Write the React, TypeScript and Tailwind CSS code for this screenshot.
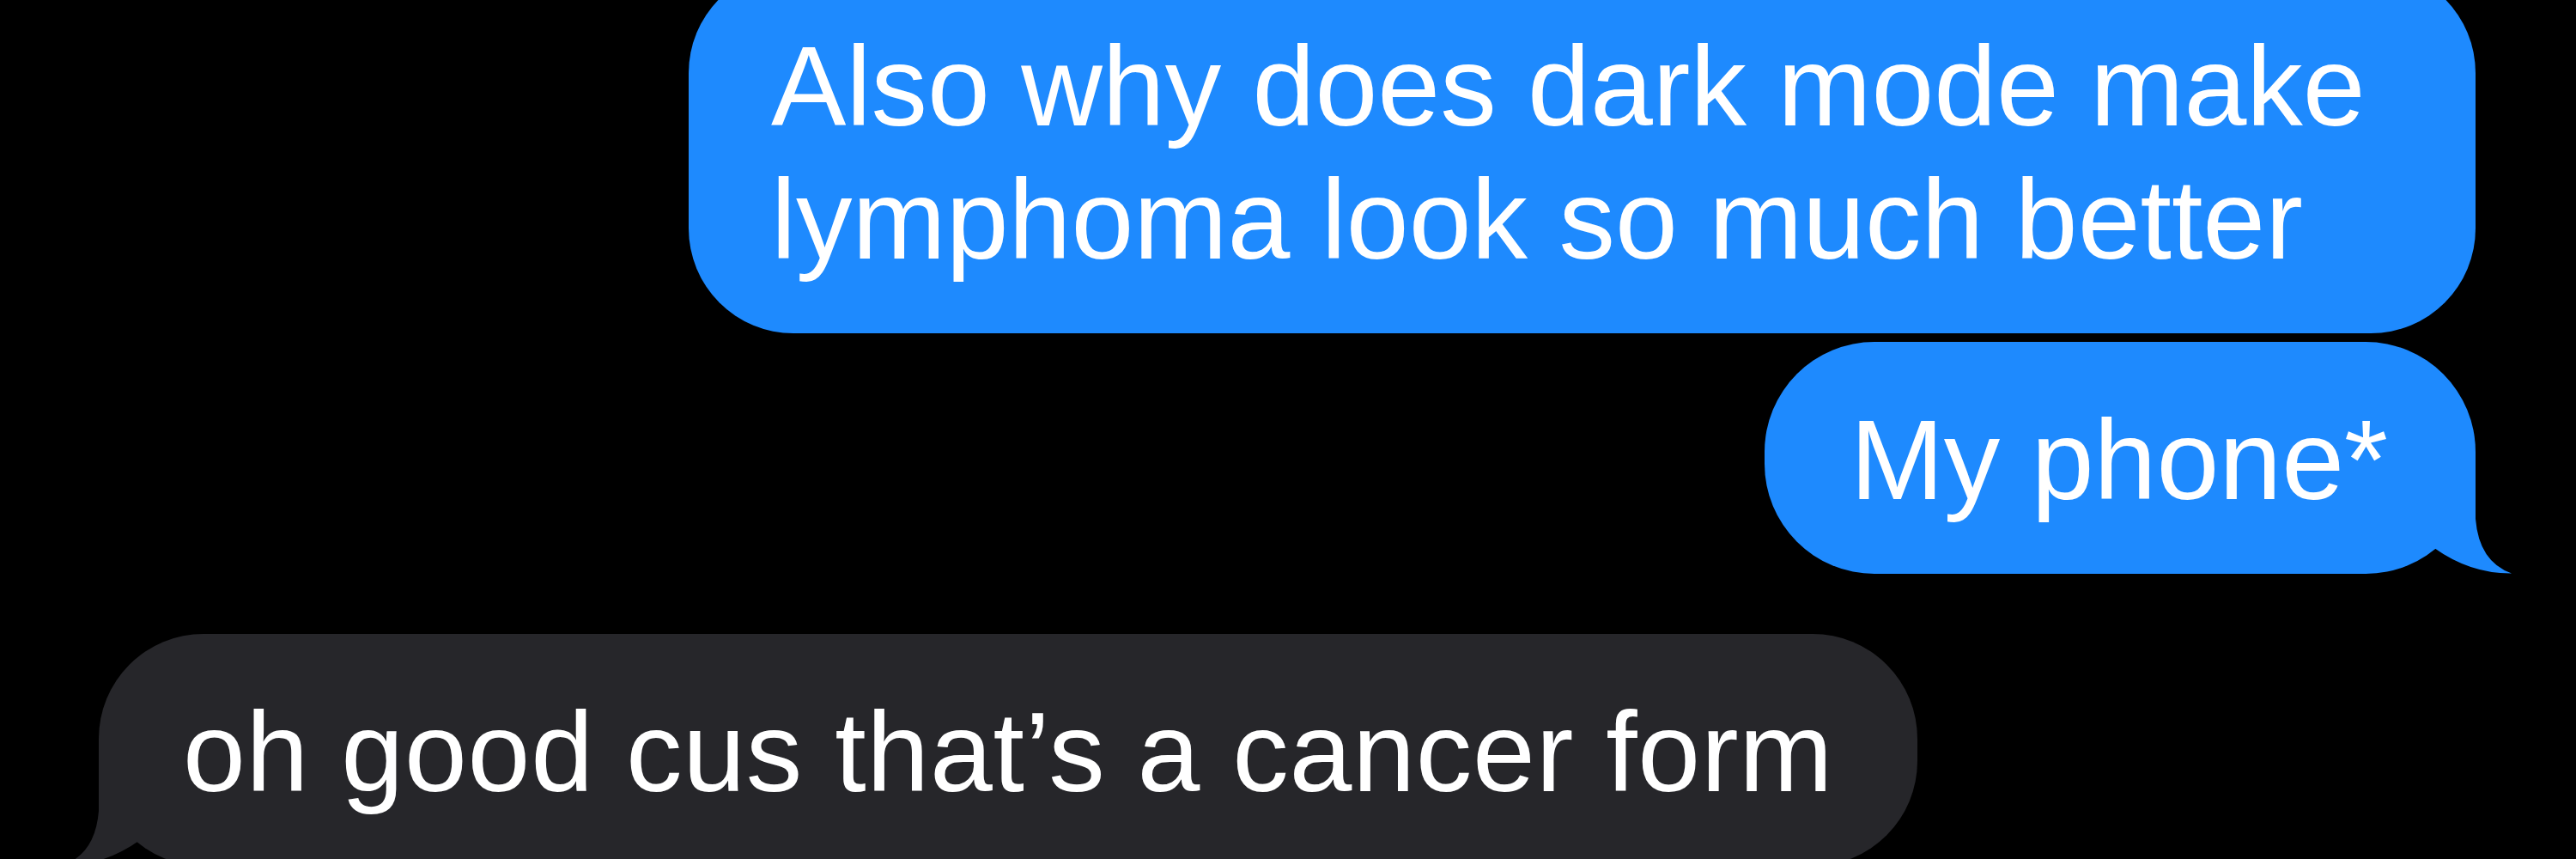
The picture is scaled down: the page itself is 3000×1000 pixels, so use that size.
import React from "react";

function Tail({ color, side }: { color: string; side: "right" | "left" }) {
  const pos =
    side === "right"
      ? "absolute bottom-0 right-[-42px]"
      : "absolute bottom-0 left-[-42px] -scale-x-100";
  return (
    <svg
      className={pos}
      width="92"
      height="130"
      viewBox="0 0 92 130"
      aria-hidden="true"
    >
      <path
        d="M50 0 L50 66 Q54 116 92 129.5 Q44 130 2 100 L2 0 Z"
        fill={color}
      />
    </svg>
  );
}

export default function App() {
  return (
    <div
      className="w-[3000px] h-[1000px] bg-black overflow-hidden text-white text-[131px] leading-[155px]"
      style={{ fontFamily: '"Liberation Sans", Arial, sans-serif' }}
    >
      <div className="flex flex-col">
        <div className="flex justify-end pr-[117px] -mt-[37px]">
          <div className="relative w-[2081px] rounded-[122px] bg-[#1E8AFE] pl-[96px] pr-[98px] pt-[60px] pb-[55px]">
            Also why does dark mode make lymphoma look so much better
          </div>
        </div>
        <div className="flex justify-end pr-[117px] mt-[10px]">
          <div className="relative rounded-[128px] bg-[#1E8AFE] pl-[100px] pr-[102px] pt-[60px] pb-[55px]">
            <span className="relative z-10">My phone*</span>
            <Tail color="#1E8AFE" side="right" />
          </div>
        </div>
        <div className="flex justify-start pl-[115px] mt-[70px]">
          <div className="relative rounded-[122px] bg-[#26262A] pl-[98px] pr-[98px] pt-[60px] pb-[55px]">
            <span className="relative z-10 tracking-[0.75px]">oh good cus that’s a cancer form</span>
            <Tail color="#26262A" side="left" />
          </div>
        </div>
      </div>
    </div>
  );
}
